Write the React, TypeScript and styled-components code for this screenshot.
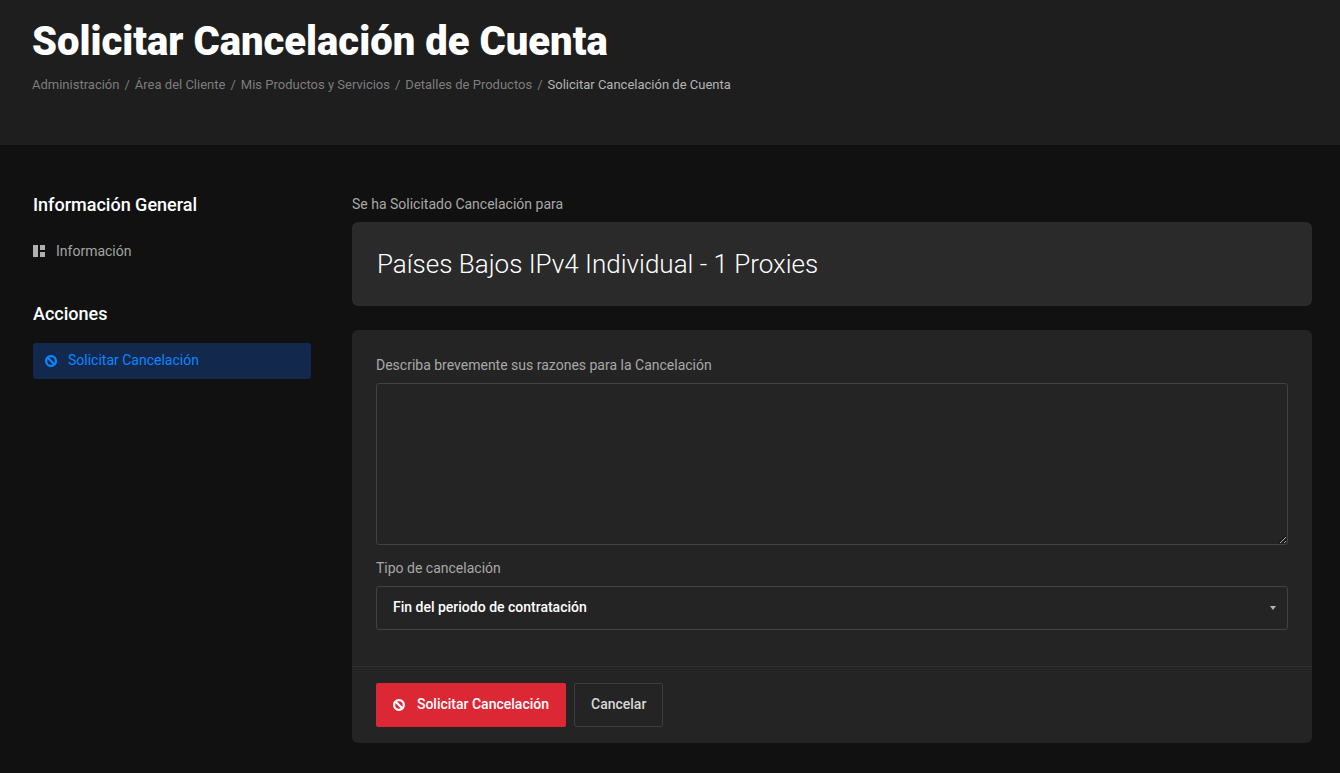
import React, { FC } from "react";
import styled, { createGlobalStyle } from "styled-components";

const GlobalStyle = createGlobalStyle`
  html, body {
    margin: 0;
    padding: 0;
    background-color: #111111;
    font-family: Roboto, "Liberation Sans", sans-serif;
    overflow: hidden;
  }
  * {
    box-sizing: border-box;
  }
`;

const BanIcon: FC = () => (
  <svg width={12} height={12} viewBox="0 0 12 12" fill="none" stroke="currentColor" strokeWidth={2.3}>
    <circle cx={6} cy={6} r={4.9} />
    <path d="M2.5 2.5l7 7" />
  </svg>
);

const QuiltIcon: FC = () => (
  <QuiltSvg width={12} height={12} viewBox="0 0 12 12" fill="currentColor">
    <path d="M0 0h5v12H0zM7 0h5v5H7zM7 7h5v5H7z" />
  </QuiltSvg>
);

const crumbs = [
  "Administración",
  "Área del Cliente",
  "Mis Productos y Servicios",
  "Detalles de Productos",
];

const App: FC = () => {
  return (
    <>
      <GlobalStyle />
      <Header>
        <Title>Solicitar Cancelación de Cuenta</Title>
        <Breadcrumb>
          {crumbs.map((c) => (
            <React.Fragment key={c}>
              <Crumb>{c}</Crumb>
              <CrumbSep>/</CrumbSep>
            </React.Fragment>
          ))}
          <CrumbActive>Solicitar Cancelación de Cuenta</CrumbActive>
        </Breadcrumb>
      </Header>
      <Main>
        <Sidebar>
          <SideTitle>Información General</SideTitle>
          <SideItem>
            <QuiltIcon />
            Información
          </SideItem>
          <SideTitle $second>Acciones</SideTitle>
          <SideActive>
            <BanIcon />
            <span>Solicitar Cancelación</span>
          </SideActive>
        </Sidebar>
        <Content>
          <Requested>Se ha Solicitado Cancelación para</Requested>
          <ProductCard>Países Bajos IPv4 Individual - 1 Proxies</ProductCard>
          <FormCard>
            <FormBody>
              <FieldLabel>Describa brevemente sus razones para la Cancelación</FieldLabel>
              <ReasonArea />
              <FieldLabel>Tipo de cancelación</FieldLabel>
              <SelectWrap>
                <TypeSelect defaultValue="fin">
                  <option value="fin">Fin del periodo de contratación</option>
                  <option value="inmediata">Inmediata</option>
                </TypeSelect>
              </SelectWrap>
            </FormBody>
            <FormFooter>
              <DangerButton>
                <BanIcon />
                <span>Solicitar Cancelación</span>
              </DangerButton>
              <GhostButton>Cancelar</GhostButton>
            </FormFooter>
          </FormCard>
        </Content>
      </Main>
    </>
  );
};

const Header = styled("header")`
  height: 145px;
  background-color: #1e1e1e;
  padding: 19px 32px 0;
`;
const Title = styled("h1")`
  margin: 0;
  font-size: 40px;
  line-height: 46px;
  font-weight: 900;
  color: #ffffff;
`;
const Breadcrumb = styled("div")`
  display: flex;
  margin-top: 11px;
  font-size: 13px;
  line-height: 18px;
`;
const Crumb = styled("span")`
  color: #7d7d7d;
`;
const CrumbSep = styled("span")`
  color: #7d7d7d;
  padding: 0 5px;
`;
const CrumbActive = styled("span")`
  color: #b4b4b4;
`;

const Main = styled("main")`
  display: grid;
  grid-template-columns: 278px 960px;
  column-gap: 41px;
  padding: 48px 0 0 33px;
`;
const Sidebar = styled("aside")`
  display: flex;
  flex-direction: column;
`;
const SideTitle = styled("h3")<{ $second?: boolean }>`
  margin: ${(p) => (p.$second ? "34px" : "1px")} 0 0;
  font-size: 18px;
  line-height: 22px;
  font-weight: 500;
  color: #ffffff;
`;
const QuiltSvg = styled("svg")`
  color: #b0b0b0;
`;
const SideItem = styled("div")`
  display: flex;
  align-items: center;
  gap: 11px;
  height: 36px;
  margin-top: 17px;
  font-size: 14px;
  color: #a3a3a3;
`;
const SideActive = styled("div")`
  display: flex;
  align-items: center;
  gap: 11px;
  height: 36px;
  margin-top: 18px;
  padding-left: 12px;
  border-radius: 3px;
  background-color: #12284c;
  font-size: 14px;
  color: #0b86ff;
  span {
    margin-top: -2px;
  }
`;

const Content = styled("section")`
  display: flex;
  flex-direction: column;
`;
const Requested = styled("div")`
  font-size: 14px;
  line-height: 20px;
  margin-top: 1px;
  color: #a8a8a8;
`;
const ProductCard = styled("div")`
  display: flex;
  align-items: center;
  height: 84px;
  margin-top: 8px;
  padding-left: 25px;
  border-radius: 6px;
  background-color: #2a2a2a;
  font-size: 26px;
  font-weight: 300;
  color: #ffffff;
`;
const FormCard = styled("div")`
  margin-top: 24px;
  border-radius: 6px;
  background-color: #242424;
`;
const FormBody = styled("div")`
  padding: 26px 24px 36px;
  display: flex;
  flex-direction: column;
  border-bottom: 1px solid #2e2e2e;
`;
const FieldLabel = styled("label")`
  font-size: 14px;
  line-height: 18px;
  color: #a8a8a8;
`;
const ReasonArea = styled("textarea")`
  display: block;
  width: 912px;
  height: 162px;
  margin: 9px 0 14px;
  background: transparent;
  border: 1px solid #424242;
  border-radius: 3px;
  outline: none;
  color: #ffffff;
`;
const SelectWrap = styled("div")`
  position: relative;
  margin-top: 9px;
  &::after {
    content: "";
    position: absolute;
    right: 12px;
    top: 20px;
    border-left: 3px solid transparent;
    border-right: 3px solid transparent;
    border-top: 4px solid #b4b4b4;
  }
`;
const TypeSelect = styled("select")`
  display: block;
  width: 100%;
  height: 44px;
  padding: 0 16px 2px;
  appearance: none;
  background: transparent;
  border: 1px solid #424242;
  border-radius: 3px;
  outline: none;
  font-family: inherit;
  font-size: 14px;
  font-weight: 500;
  color: #ffffff;
  option {
    background-color: #242424;
  }
`;
const FormFooter = styled("div")`
  display: flex;
  gap: 8px;
  padding: 16px 24px;
`;
const DangerButton = styled("button")`
  display: flex;
  align-items: center;
  gap: 12px;
  width: 190px;
  height: 44px;
  padding: 0 17px;
  border: 0;
  border-radius: 2px;
  background-color: #dc2735;
  font-family: inherit;
  font-size: 14px;
  font-weight: 500;
  color: #ffffff;
  white-space: nowrap;
  span {
    margin-top: -2px;
  }
`;
const GhostButton = styled("button")`
  height: 44px;
  padding: 0 16px 2px;
  border: 1px solid #3d3d3d;
  border-radius: 2px;
  background: transparent;
  font-family: inherit;
  font-size: 14px;
  font-weight: 500;
  color: #d8d8d8;
`;

export default App;
